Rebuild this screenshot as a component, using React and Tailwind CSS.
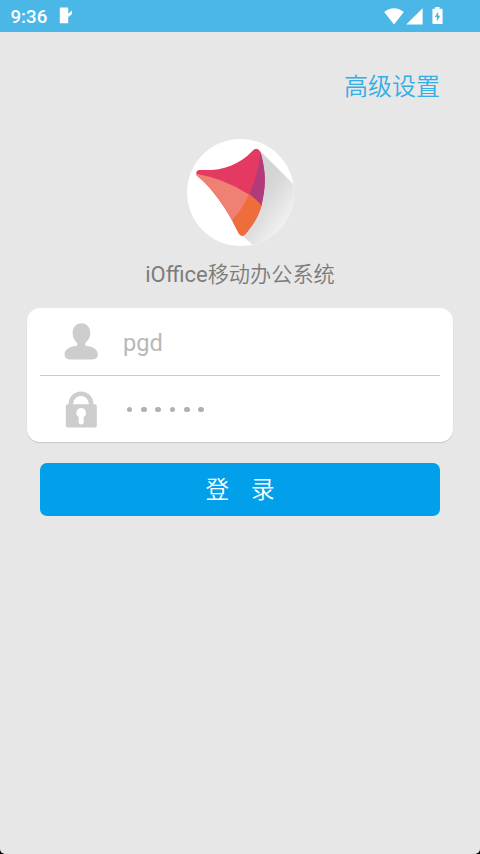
import React from 'react';

function App() {
  return (
    <div className="h-[854px] w-[480px] overflow-hidden bg-black">
      <div className="flex h-full flex-col overflow-hidden rounded-b-[5px] bg-[#e7e7e7] font-['Roboto','Noto_Sans_CJK_SC',sans-serif]">
        <StatusBar />

        <header className="flex h-[107px] shrink-0 justify-end pt-[37px] pr-10">
          <button className="h-9 text-[24px] leading-9 font-[350] text-[#35ade5]">高级设置</button>
        </header>

        <main className="flex flex-col">
          <div className="flex flex-col items-center">
            <Logo />
            <h1 className="mt-[13px] h-8 text-[21.2px] leading-8 text-[#7c7c7c]">
              <span className="text-[22px]">iOffice</span>
              <span className="font-[350]">移动办公系统</span>
            </h1>
          </div>

          <form className="mt-[17px] flex flex-col">
            <div className="mx-[27px] flex h-[134px] flex-col rounded-[13px] bg-white px-[13px] shadow-[0_1px_1px_#c8c8c8]">
              <div className="flex h-[68px] items-center border-b border-[#cbcbcb] pl-[24px]">
                <UserIcon />
                <span className="mt-[3px] ml-[25px] text-[23.6px] leading-8 text-[#b8b8b8]">pgd</span>
              </div>
              <div className="flex h-[66px] items-center pl-[25px]">
                <LockIcon />
                <div className="mt-px ml-[29.8px] flex gap-[8.6px]">
                  {[...Array(6)].map((_, i) => (
                    <span key={i} className="size-[5.7px] rounded-full bg-[#b0b0b0]" />
                  ))}
                </div>
              </div>
            </div>

            <button
              type="button"
              className="mx-10 mt-[21px] flex h-[53px] items-center justify-center gap-[22px] rounded-[7px] bg-[#02a0ea] pt-[3px] text-[23.6px] leading-none font-[350] text-white"
            >
              <span>登</span>
              <span>录</span>
            </button>
          </form>
        </main>
      </div>
    </div>
  );
}

/* ---------- Status bar ---------- */

const StatusBar = () => (
  <div className="flex h-8 shrink-0 items-center justify-between bg-[#4ab7e7] pr-[37px] pl-[10.5px] text-white">
    <div className="flex items-center">
      <span className="pt-0.5 text-[18.7px] leading-none font-medium">9:36</span>
      <svg className="ml-[12px] h-[17px] w-[13px]" viewBox="0 0 13 17" fill="currentColor">
        <path d="M.8.5h8.4v5.9L12.9 3.6v3.6L9.2 9.9v6.4H.8z" />
      </svg>
    </div>
    <div className="flex items-center">
      <svg className="h-[17px] w-[20px]" viewBox="0 0 20 17" fill="currentColor">
        <path d="M.2 4.1Q4.5.2 10 .2t9.8 3.9L10 16.4z" />
      </svg>
      <svg className="ml-[2px] h-[17px] w-[17px]" viewBox="0 0 17 17" fill="currentColor">
        <path d="M16.6.2v16.2H.2z" />
      </svg>
      <svg className="ml-[9px] h-[18px] w-[11px]" viewBox="0 0 11 18">
        <path d="M3.2 0h4.4v1.7h2.1q.9 0 .9.9v13.5q0 1-.9 1H1.3q-.9 0-.9-1V2.6q0-.9.9-.9h1.9z" fill="currentColor" />
        <path d="M6.2 4.6L2.8 10h2.1v4.4l3.4-5.6H6.2z" fill="#4ab7e7" />
      </svg>
    </div>
  </div>
);

/* ---------- Icons ---------- */

const Logo = () => (
  <svg className="size-[107px]" viewBox="35 25 321 321">
    <defs>
      <clipPath id="disc">
        <circle cx="195.5" cy="185.5" r="160.5" />
      </clipPath>
      <clipPath id="sail">
        <path d="M74 118C137 121 188 106 232 60Q241 50 250 57Q256 62 258 74C273 132 271 170 258 226C248 260 231 286 210 310Q200 321 191 309C165 254 117 175 65 135Q58 120 74 118Z" />
      </clipPath>
      <linearGradient id="shade" gradientUnits="userSpaceOnUse" x1="238" y1="215" x2="322" y2="275">
        <stop offset="0" stopColor="#d4d4d4" />
        <stop offset=".5" stopColor="#e0e0e0" />
        <stop offset="1" stopColor="#efefef" />
      </linearGradient>
    </defs>
    <circle cx="195.5" cy="185.5" r="160.5" fill="#fff" />
    <g clipPath="url(#disc)">
      <path d="M252 58L375 181V370H262L200 314Z" fill="url(#shade)" />
    </g>
    <g clipPath="url(#sail)">
      <path d="M50 40H290V330H50z" fill="#e43960" />
      <path d="M257 55Q250 130 222 188L258 226L285 228V55z" fill="#b13a7d" />
      <path d="M55 128Q145 142 222 192Q200 237 172 270L130 290z" fill="#ef8074" />
      <path d="M221 191Q242 205 262 228L260 330H180L172 266Q202 235 221 191z" fill="#ef6d3b" />
    </g>
  </svg>
);

const UserIcon = () => (
  <svg className="h-[37px] w-[34px]" viewBox="0 0 34 37" fill="#cdcdcd">
    <path d="M17.6.3C11.8.3 8.6 4.8 8.6 10c0 4.5 2 7.3 4 9.4 1.2 1.4 1 2.9-.7 3.7C5.8 23.6.6 26.6.6 31.2c0 3.4 2.1 5.2 5.4 5.2h22.5c3.2 0 5.3-1.8 5.3-5.2 0-4.6-5.2-7.6-11.2-8.1-1.9-.8-2-2.3-.7-3.7 2.4-2.4 4.4-4.9 4.4-9.4 0-5.2-3.2-9.7-8.7-9.7z" />
  </svg>
);

const LockIcon = () => (
  <svg className="h-[37px] w-[32px]" viewBox="0 0 32 37">
    <path d="M5.9 16v-3.2a10.1 10.1 0 0 1 20.2 0V16" fill="none" stroke="#cdcdcd" strokeWidth="4.6" />
    <rect x=".8" y="13.3" width="31" height="23.3" rx="1.8" fill="#cdcdcd" />
    <path d="M16.2 17a4.9 4.9 0 0 0-2.5 9.1v5a2.5 2.5 0 0 0 5 0v-5a4.9 4.9 0 0 0-2.5-9.1z" fill="#fff" />
  </svg>
);

export default App;
